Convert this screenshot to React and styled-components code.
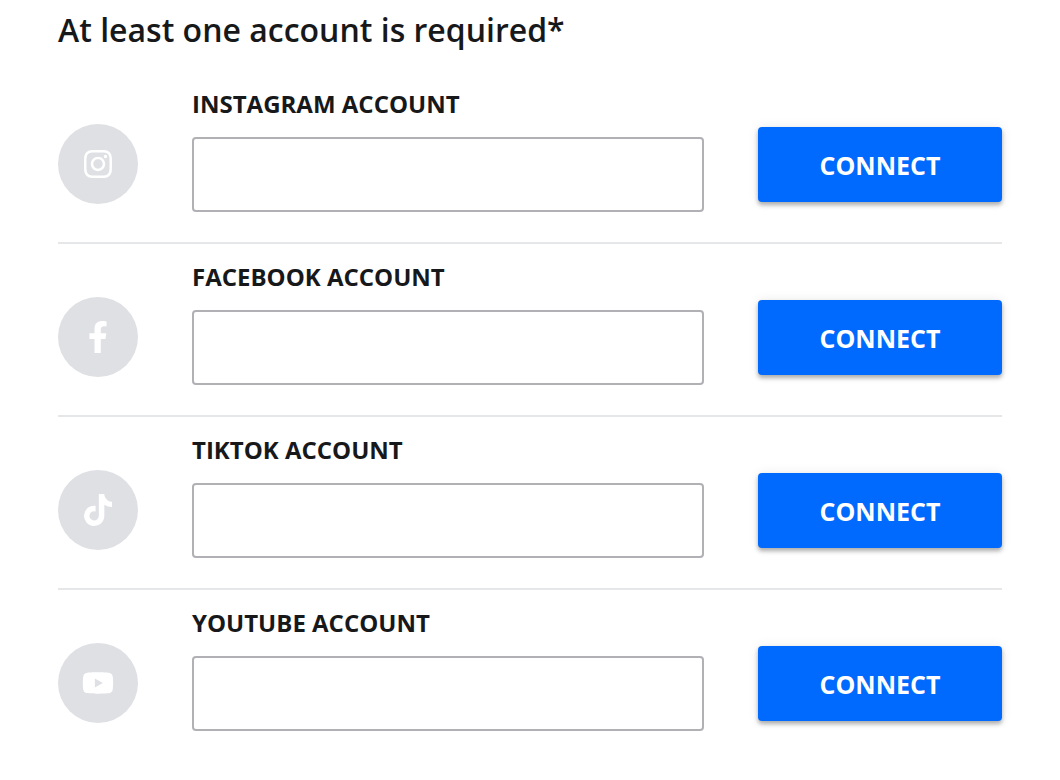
import React from 'react'
import styled, { createGlobalStyle } from 'styled-components';
import { FaInstagram, FaFacebookF, FaTiktok, FaYoutube } from 'react-icons/fa';

const GlobalStyle = createGlobalStyle`
  *, *::before, *::after {
    box-sizing: border-box;
  }

  body {
    margin: 0;
    background-color: #fff;
    color: #17181a;
    font-family: "Open Sans", "Noto Sans", sans-serif;
  }
`;

const Section = styled.form`
  padding: 8px 58px 24px;
`;

const Title = styled.h1`
  margin: 0 0 19px;
  font-size: 32px;
  font-weight: 600;
  line-height: 44px;
`;

const AccountRow = styled.div`
  display: grid;
  grid-template-columns: 80px 1fr 244px;
  column-gap: 54px;
  align-items: end;
  padding: 16px 0 30px;
  border-bottom: 2px solid #e6e7e8;

  &:last-child {
    border-bottom: none;
  }
`;

const IconCircle = styled.div`
  display: flex;
  align-items: center;
  justify-content: center;
  height: 80px;
  margin-bottom: 8px;
  border-radius: 50%;
  background-color: #dfe0e4;
  color: #fff;
  font-size: 32px;
`;

const Field = styled.div`
  display: flex;
  flex-direction: column;
  gap: 16px;
`;

const Label = styled.label`
  font-size: 24px;
  font-weight: 700;
  line-height: 34px;
  text-transform: uppercase;
`;

const Input = styled.input`
  width: 100%;
  height: 75px;
  padding: 0 20px;
  border: 2px solid #b0b0b5;
  border-radius: 4px;
  background-color: #fff;
  font: inherit;
  font-size: 24px;
`;

const ConnectButton = styled.button`
  height: 75px;
  margin-bottom: 10px;
  border: none;
  border-radius: 4px;
  background-color: #006aff;
  box-shadow: 0 3px 4px rgba(0, 0, 0, 0.3), 0 0 12px rgba(0, 0, 0, 0.08);
  color: #fff;
  font: inherit;
  font-size: 25px;
  font-weight: 700;
  text-transform: uppercase;
  cursor: pointer;
`;

const accounts = [
  { id: 'instagram', label: 'Instagram account', Icon: FaInstagram },
  { id: 'facebook', label: 'Facebook account', Icon: FaFacebookF },
  { id: 'tiktok', label: 'TikTok account', Icon: FaTiktok },
  { id: 'youtube', label: 'YouTube account', Icon: FaYoutube },
];

const App = () => {
    return (
        <>
            <GlobalStyle />
            <Section>
                <Title>At least one account is required*</Title>
                {accounts.map(({ id, label, Icon }) => (
                    <AccountRow key={id}>
                        <IconCircle><Icon aria-hidden="true" /></IconCircle>
                        <Field>
                            <Label htmlFor={id}>{label}</Label>
                            <Input id={id} name={id} type="text" />
                        </Field>
                        <ConnectButton type="button">Connect</ConnectButton>
                    </AccountRow>
                ))}
            </Section>
        </>
    )
}

export default App;
